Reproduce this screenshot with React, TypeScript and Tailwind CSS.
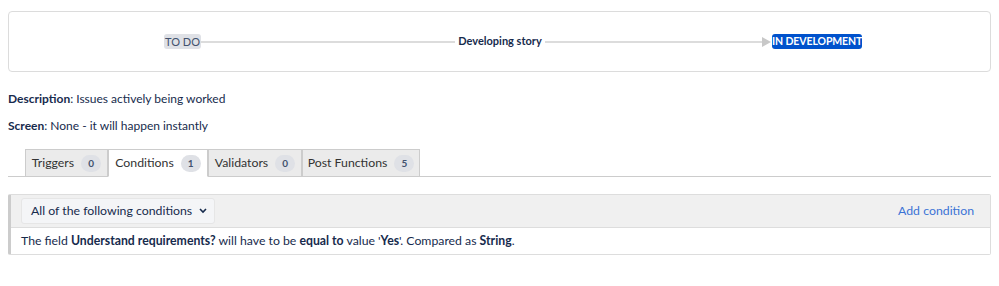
import React from "react";

export default function App() {
  const font = { fontFamily: "Lato, 'Open Sans', sans-serif" };
  return (
    <div className="w-[999px] h-[286px] bg-white text-[#172b4d] text-[12.2px]" style={font}>
      <div className="pt-[11px] px-[8px]">
        <div className="h-[61px] border border-[#dcdcdc] rounded-[4px] flex items-center pl-[155px]">
          <span className="w-[37px] text-center bg-[#dfe1e6] text-[#42526e] text-[11px] leading-[15px] rounded-[3px] whitespace-nowrap">TO DO</span>
          <div className="w-[254px] h-[2px] bg-[#dcdcdc]" />
          <span className="w-[90px] text-center font-bold text-[11px] text-[#172b4d] whitespace-nowrap">Developing story</span>
          <div className="w-[218px] h-[2px] bg-[#dcdcdc]" />
          <svg width="9" height="10" viewBox="0 0 9 10" className="-ml-[1px]"><path d="M0 0 L9 5 L0 10 Z" fill="#c8c8c8" /></svg>
          <span className="w-[90px] text-center bg-[#0052cc] text-white font-bold text-[10.5px] tracking-[-0.1px] leading-[15px] rounded-[3px] ml-[1px] whitespace-nowrap">IN DEVELOPMENT</span>
        </div>
      </div>
      <div className="px-[8px] mt-[19px] leading-[16px] text-[12px]">
        <p><b>Description</b>: Issues actively being worked</p>
        <p className="mt-[11px]"><b>Screen</b>: None - it will happen instantly</p>
      </div>
      <div className="mx-[8px] mt-[16px] border-b border-[#ccc] flex pl-[17px] h-[27px] items-end">
        <Tab label="Triggers" n="0" w="w-[83px]" />
        <Tab label="Conditions" n="1" w="w-[100px]" active />
        <Tab label="Validators" n="0" w="w-[94px]" />
        <Tab label="Post Functions" n="5" w="w-[118px]" />
      </div>
      <div className="mx-[8px] mt-[17px] border border-[#ddd] border-l-[3px] border-l-[#ccc] rounded-[2px]">
        <div className="bg-[#f0f0f0] h-[33px] flex items-center justify-between px-[10px] border-b border-[#ddd]">
          <div className="w-[194px] h-[26px] bg-[#f4f5f7] border border-[#e6e6e6] rounded-[3px] flex items-center justify-between pl-[9px] pr-[6px] text-[12.3px] text-[#172b4d] whitespace-nowrap">
            <span>All of the following conditions</span>
            <svg width="10" height="8" viewBox="0 0 10 8"><path d="M2 2 L5 5 L8 2" stroke="#172b4d" strokeWidth="1.6" fill="none" /></svg>
          </div>
          <span className="text-[#3b73d6] text-[12.3px] mr-[6px]">Add condition</span>
        </div>
        <div className="h-[26px] flex items-center px-[10px] text-[12.25px] whitespace-nowrap">
          <span>The field <b>Understand requirements?</b> will have to be <b>equal to</b> value '<b>Yes</b>'. Compared as <b>String</b>.</span>
        </div>
      </div>
    </div>
  );
}

function Tab({ label, n, w, active }: { label: string; n: string; w: string; active?: boolean }) {
  return (
    <div
      className={`${w} flex items-center justify-center gap-[7px] border border-[#ccc] ${active ? "bg-white border-b-white -mb-[1px] h-[28px]" : "bg-[#ebebeb] border-b-0 h-[27px]"} text-[12.3px] text-[#333] whitespace-nowrap`}
    >
      <span>{label}</span>
      <span className="w-[20px] h-[17px] flex items-center justify-center bg-[#dfe1e6] rounded-full text-[10px] font-bold text-[#42526e]">{n}</span>
    </div>
  );
}
